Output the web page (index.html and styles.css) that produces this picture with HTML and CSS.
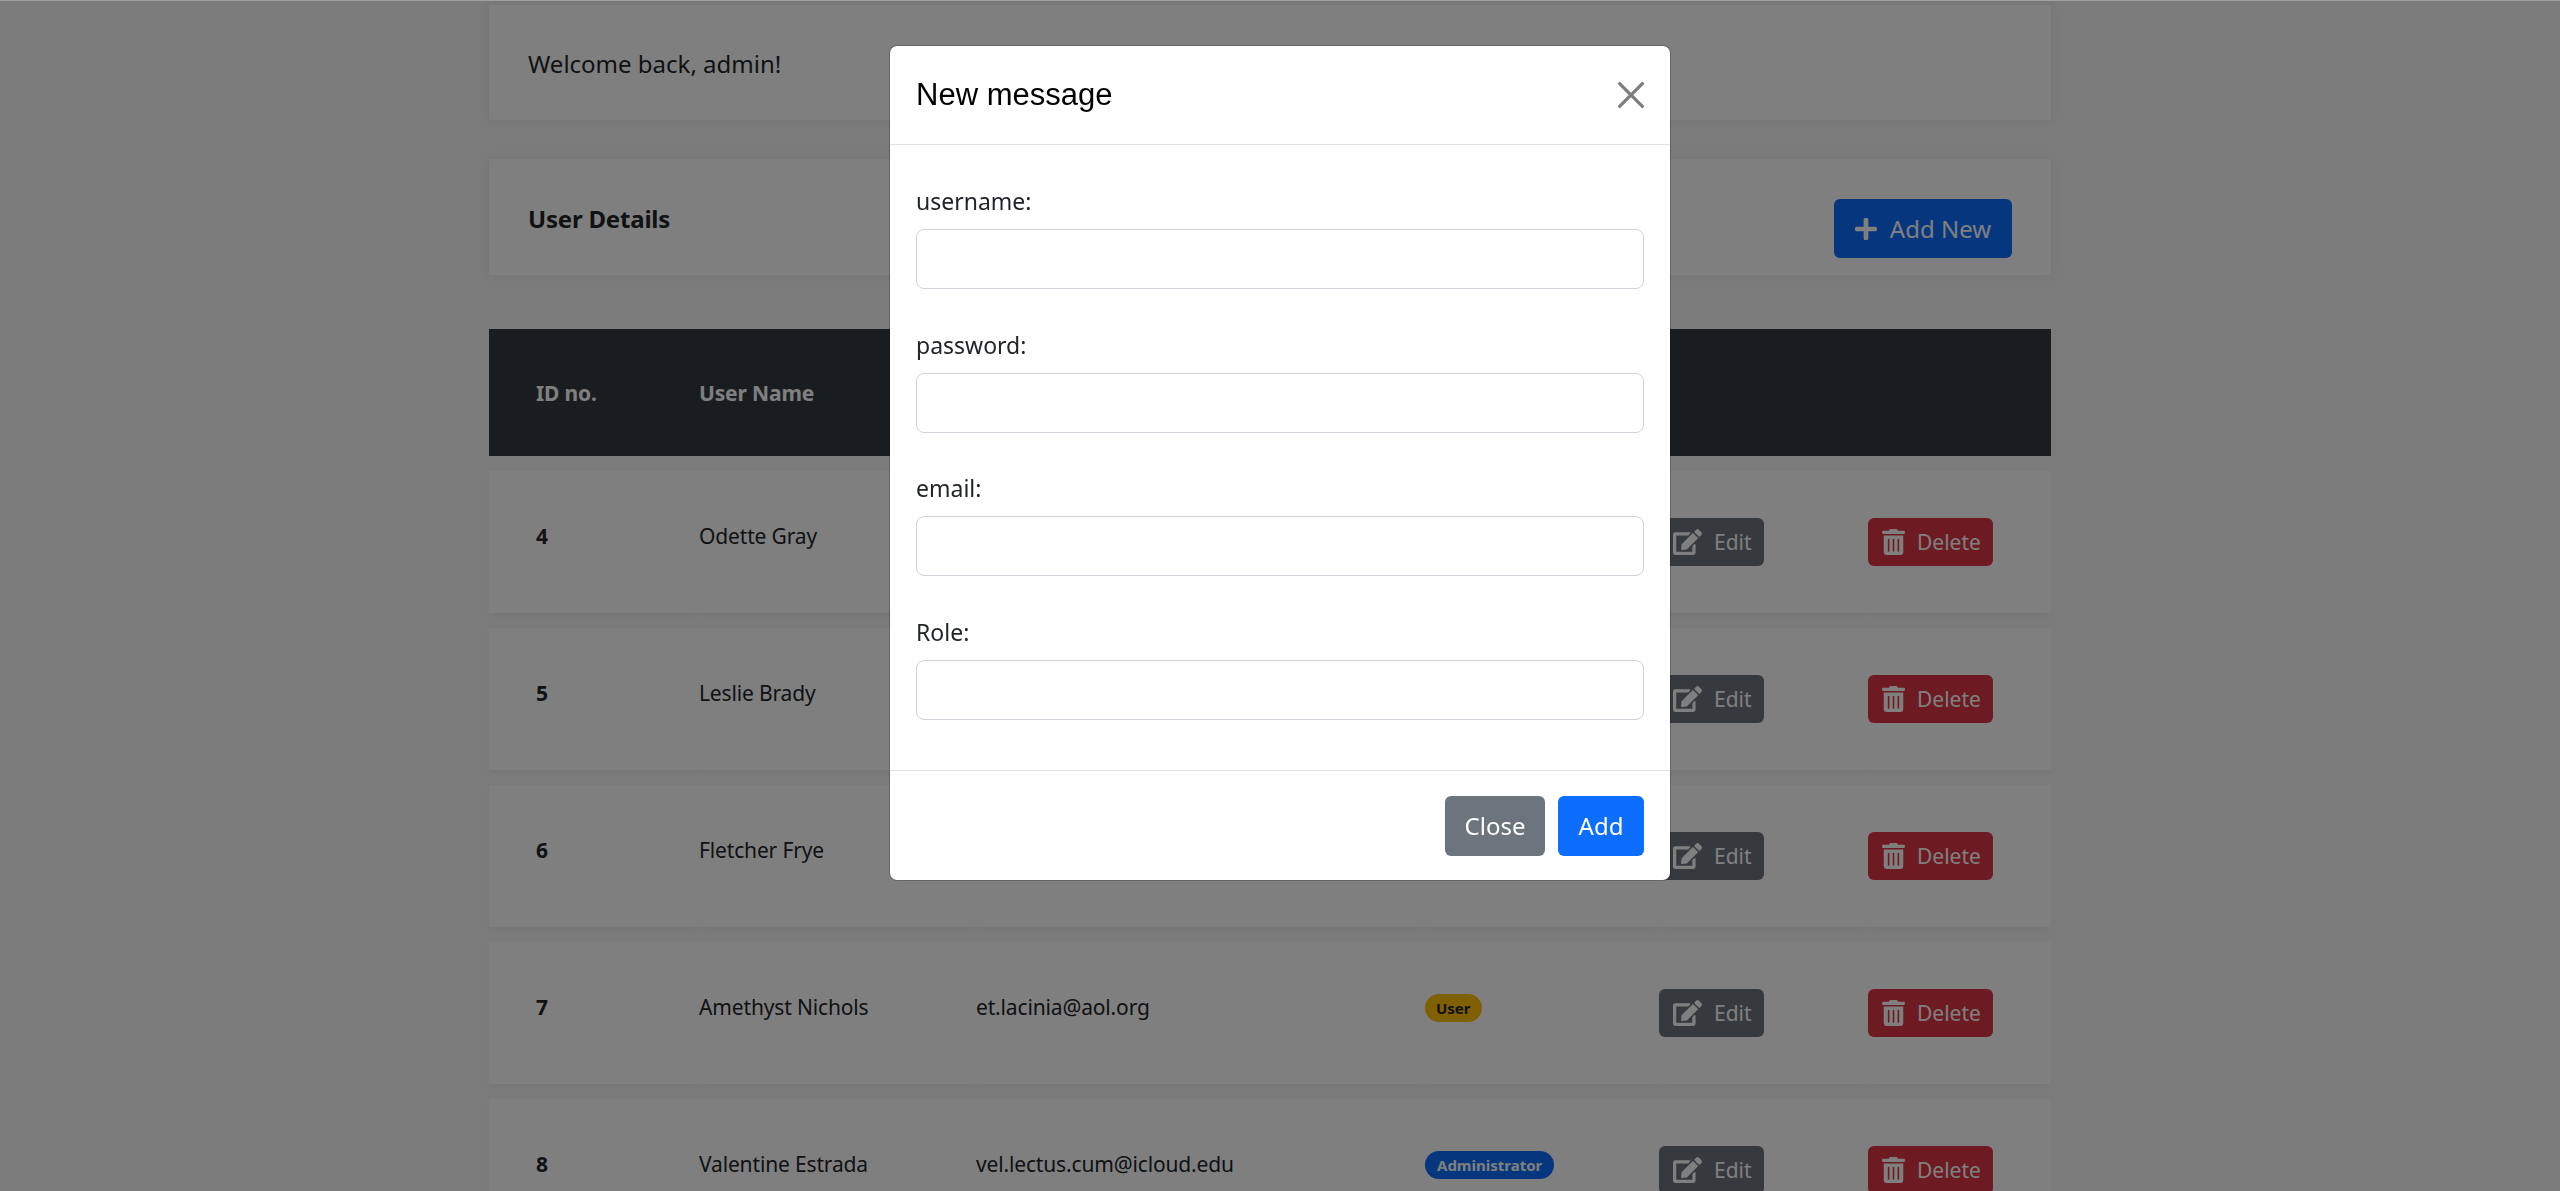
FILE: index.html
```html
<!DOCTYPE html>
<html lang="en">
	<head>
		<meta charset="UTF-8">
		<title>User Details</title>
		<link rel="stylesheet" href="styles.css">
	</head>
	<body>
		<div class="page">
			<div class="card">Welcome back, admin!</div>
			<div class="card card-split">
				<strong>User Details</strong>
				<button class="btn btn-add">
					<svg class="icon icon-plus" viewBox="0 0 448 512"><path d="M416 208H272V64c0-17.67-14.33-32-32-32h-32c-17.67 0-32 14.33-32 32v144H32c-17.67 0-32 14.33-32 32v32c0 17.67 14.33 32 32 32h144v144c0 17.67 14.33 32 32 32h32c17.67 0 32-14.33 32-32V304h144c17.67 0 32-14.33 32-32v-32c0-17.67-14.33-32-32-32z"/></svg>
					Add New
				</button>
			</div>
			<table class="users">
				<colgroup>
					<col class="col-id"><col class="col-name"><col class="col-email"><col class="col-role"><col class="col-edit"><col class="col-delete">
				</colgroup>
				<thead>
					<tr><th>ID no.</th><th>User Name</th><th>Email</th><th>Role</th><th></th><th></th></tr>
				</thead>
				<tbody>
					<tr>
						<td class="id">4</td><td>Odette Gray</td><td></td><td></td>
						<td class="action"><button class="btn btn-edit"><svg class="icon icon-edit" viewBox="0 0 576 512"><use href="#edit"/></svg>Edit</button></td>
						<td class="action"><button class="btn btn-delete"><svg class="icon icon-trash" viewBox="0 0 448 512"><use href="#trash"/></svg>Delete</button></td>
					</tr>
					<tr>
						<td class="id">5</td><td>Leslie Brady</td><td></td><td></td>
						<td class="action"><button class="btn btn-edit"><svg class="icon icon-edit" viewBox="0 0 576 512"><use href="#edit"/></svg>Edit</button></td>
						<td class="action"><button class="btn btn-delete"><svg class="icon icon-trash" viewBox="0 0 448 512"><use href="#trash"/></svg>Delete</button></td>
					</tr>
					<tr>
						<td class="id">6</td><td>Fletcher Frye</td><td></td><td></td>
						<td class="action"><button class="btn btn-edit"><svg class="icon icon-edit" viewBox="0 0 576 512"><use href="#edit"/></svg>Edit</button></td>
						<td class="action"><button class="btn btn-delete"><svg class="icon icon-trash" viewBox="0 0 448 512"><use href="#trash"/></svg>Delete</button></td>
					</tr>
					<tr>
						<td class="id">7</td><td>Amethyst Nichols</td><td>et.lacinia@aol.org</td><td><span class="badge badge-user">User</span></td>
						<td class="action"><button class="btn btn-edit"><svg class="icon icon-edit" viewBox="0 0 576 512"><use href="#edit"/></svg>Edit</button></td>
						<td class="action"><button class="btn btn-delete"><svg class="icon icon-trash" viewBox="0 0 448 512"><use href="#trash"/></svg>Delete</button></td>
					</tr>
					<tr>
						<td class="id">8</td><td>Valentine Estrada</td><td>vel.lectus.cum@icloud.edu</td><td><span class="badge badge-admin">Administrator</span></td>
						<td class="action"><button class="btn btn-edit"><svg class="icon icon-edit" viewBox="0 0 576 512"><use href="#edit"/></svg>Edit</button></td>
						<td class="action"><button class="btn btn-delete"><svg class="icon icon-trash" viewBox="0 0 448 512"><use href="#trash"/></svg>Delete</button></td>
					</tr>
				</tbody>
			</table>
		</div>

		<div class="backdrop"></div>

		<div class="modal-wrap">
			<div class="modal">
				<div class="modal-header">
					<h5>New message</h5>
					<svg class="btn-close" viewBox="0 0 16 16"><path d="M.293.293a1 1 0 011.414 0L8 6.586 14.293.293a1 1 0 111.414 1.414L9.414 8l6.293 6.293a1 1 0 01-1.414 1.414L8 9.414l-6.293 6.293a1 1 0 01-1.414-1.414L6.586 8 .293 1.707a1 1 0 010-1.414z"/></svg>
				</div>
				<form class="modal-body">
					<label class="field"><span>username:</span><input type="text"></label>
					<label class="field"><span>password:</span><input type="text"></label>
					<label class="field"><span>email:</span><input type="text"></label>
					<label class="field"><span>Role:</span><input type="text"></label>
				</form>
				<div class="modal-footer">
					<button class="btn btn-close-modal">Close</button>
					<button class="btn btn-primary">Add</button>
				</div>
			</div>
		</div>

		<svg class="defs" width="0" height="0">
			<defs>
				<path id="edit" d="M402.6 83.2l90.2 90.2c3.8 3.8 3.8 10 0 13.8L274.4 405.6l-92.8 10.3c-12.4 1.4-22.9-9.1-21.5-21.5l10.3-92.8L388.8 83.2c3.8-3.8 10-3.8 13.8 0zm162-22.9l-48.8-48.8c-15.2-15.2-39.9-15.2-55.2 0l-35.4 35.4c-3.8 3.8-3.8 10 0 13.8l90.2 90.2c3.8 3.8 10 3.8 13.8 0l35.4-35.4c15.2-15.3 15.2-40 0-55.2zM384 346.2V448H64V128h229.8c3.2 0 6.2-1.3 8.5-3.5l40-40c7.6-7.6 2.2-20.5-8.5-20.5H48C21.5 64 0 85.5 0 112v352c0 26.5 21.5 48 48 48h352c26.5 0 48-21.5 48-48V306.2c0-10.7-12.9-16-20.5-8.5l-40 40c-2.2 2.3-3.5 5.3-3.5 8.5z"/>
				<path id="trash" d="M32 464a48 48 0 0 0 48 48h288a48 48 0 0 0 48-48V128H32zm272-256a16 16 0 0 1 32 0v224a16 16 0 0 1-32 0zm-96 0a16 16 0 0 1 32 0v224a16 16 0 0 1-32 0zm-96 0a16 16 0 0 1 32 0v224a16 16 0 0 1-32 0zM432 32H312l-9.4-18.7A24 24 0 0 0 281.1 0H166.8a23.72 23.72 0 0 0-21.4 13.3L136 32H16A16 16 0 0 0 0 48v32a16 16 0 0 0 16 16h416a16 16 0 0 0 16-16V48a16 16 0 0 0-16-16z"/>
			</defs>
		</svg>
	</body>
</html>
```

FILE: styles.css
```css
* {
	box-sizing: border-box;
}

html, body {
	height:   100%;
	overflow: hidden;
}

body {
	margin:      0;
	background:  #f6f6f9;
	color:       #212529;
	font-family: "Noto Sans", sans-serif;
	font-size:   24px;
}

.page {
	width:       1562px;
	margin-left: 489px;
	padding-top: 5px;
}

.card {
	height:        115px;
	margin-bottom: 39px;
	padding:       40px 39px 0;
	line-height:   38px;
	background:    #fff;
	box-shadow:    0 0 10px rgba(0, 0, 0, .06);
}

.card strong {
	margin-top:     1px;
	letter-spacing: -.2px;
}

.card-split {
	display:         flex;
	justify-content: space-between;
	align-items:     flex-start;
	height:          116px;
}

.btn {
	display:       inline-flex;
	align-items:   center;
	border:        0;
	border-radius: 6px;
	color:         #fff;
	font-family:   inherit;
}

.btn-add {
	width:           178px;
	height:          59px;
	justify-content: center;
	background:      #0d6efd;
	font-size:       24px;
}

.icon {
	fill: currentColor;
}

.icon-plus {
	width:        22px;
	height:       26px;
	margin-right: 13px;
}

.users {
	width:           1562px;
	margin-top:      0;
	border-collapse: separate;
	border-spacing:  0 15px;
	table-layout:    fixed;
}

.col-id     { width: 210px; }
.col-name   { width: 277px; }
.col-email  { width: 449px; }
.col-role   { width: 234px; }
.col-edit   { width: 209px; }
.col-delete { width: 183px; }

th, td {
	padding:        0;
	text-align:     left;
	font-size:      21px;
	letter-spacing: -.15px;
}

th {
	height:     127px;
	background: #353a40;
	color:      #fff;
}

th:first-child,
td:first-child {
	padding-left: 47px;
}

td {
	height:         142px;
	padding-bottom: 12px;
	background:     #fff;
	box-shadow:     0 4px 6px -2px rgba(0, 0, 0, .05);
}

td.id {
	font-weight: 700;
}

td.action {
	padding-bottom: 0;
}

.btn-edit,
.btn-delete {
	height:    48px;
	font-size: 21px;
}

.btn-edit {
	width:      105px;
	padding:    0 0 0 14px;
	background: #6c757d;
}

.btn-delete {
	width:      125px;
	padding:    0 0 0 14px;
	background: #dc3545;
}

.icon-edit {
	width:        29px;
	height:       26px;
	margin-right: 12px;
}

.icon-trash {
	width:        23px;
	height:       26px;
	margin-right: 12px;
}

.badge {
	display:        inline-block;
	padding:        0 11px;
	border-radius:  14px;
	font-size:      15px;
	font-weight:    700;
	line-height:    28px;
	letter-spacing: 0;
}

.badge-user {
	background: #ffc107;
	color:      #212529;
}

.badge-admin {
	padding:    0 12px;
	background: #0d6efd;
	color:      #fff;
}

.backdrop {
	position:        fixed;
	inset:           0;
	background:      rgba(0, 0, 0, .5);
	background-clip: padding-box;
	border-top:      1px solid #a0a0a2;
}

.modal-wrap {
	position:        fixed;
	inset:           0;
	display:         flex;
	justify-content: center;
	align-items:     flex-start;
	padding-top:     45px;
}

.modal {
	width:           782px;
	background:      #fff;
	border:          1px solid rgba(0, 0, 0, .2);
	border-radius:   8px;
	background-clip: padding-box;
}

.modal-header {
	display:         flex;
	justify-content: space-between;
	align-items:     center;
	height:          99px;
	padding:         0 26px;
	border-bottom:   1px solid #dee2e6;
}

.modal-header h5 {
	margin:      0;
	font-family: "Liberation Sans", sans-serif;
	font-size:   31px;
	font-weight: 400;
	color:       #000;
}

.btn-close {
	width:   26px;
	height:  26px;
	opacity: .5;
}

.modal-body {
	display:        flex;
	flex-direction: column;
	gap:            36.67px;
	padding:        37px 26px 50px;
}

.field {
	display: block;
}

.field span {
	display:       block;
	height:        38px;
	margin-bottom: 9px;
	font-size:     23px;
	line-height:   38px;
}

.field input {
	display:       block;
	width:         100%;
	height:        60px;
	border:        1.6px solid #ced4da;
	border-radius: 8px;
	background:    #fff;
}

.modal-footer {
	display:         flex;
	justify-content: flex-end;
	gap:             13px;
	padding:         25px 26px 24px;
	border-top:      1px solid #dee2e6;
}

.modal-footer .btn {
	height:          60px;
	justify-content: center;
	font-size:       24px;
}

.btn-close-modal {
	width:      100px;
	background: #6c757d;
}

.btn-primary {
	width:      86px;
	background: #0d6efd;
}

.defs {
	position: absolute;
}
```
